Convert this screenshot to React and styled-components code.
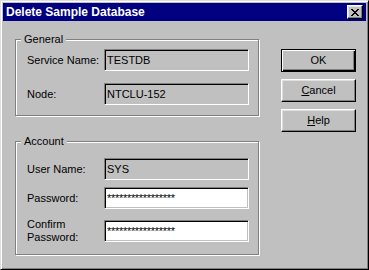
import React from "react";
import styled, { createGlobalStyle } from "styled-components";

const Global = createGlobalStyle`
  html, body { margin: 0; padding: 0; background: #c0c0c0; }
  body { font-family: "Liberation Sans", Arial, sans-serif; font-size: 11px; color: #000; }
  * { box-sizing: border-box; }
`;

const Window = styled.div`
  width: 369px;
  height: 270px;
  background: #c0c0c0;
  border: 1px solid;
  border-color: #dfdfdf #000 #000 #dfdfdf;
  box-shadow: inset 1px 1px #fff, inset -1px -1px #808080;
  padding: 2px;
  display: flex;
  flex-direction: column;
`;

const TitleBar = styled.div`
  height: 18px;
  background: #000080;
  color: #fff;
  display: flex;
  align-items: center;
  justify-content: space-between;
  padding: 0 3px 0 3px;
`;

const Title = styled.span`
  font-weight: bold;
  font-size: 12px;
  line-height: 14px;
`;

const CloseButton = styled.div`
  width: 16px;
  height: 14px;
  background: #c0c0c0;
  border: 1px solid;
  border-color: #fff #000 #000 #fff;
  box-shadow: inset -1px -1px #808080, inset 1px 1px #dfdfdf;
  display: flex;
  align-items: center;
  justify-content: center;
`;

const Body = styled.div`
  flex: 1;
  display: flex;
  gap: 22px;
  padding: 12px 0 0 12px;
`;

const LeftCol = styled.div`
  width: 244px;
  display: flex;
  flex-direction: column;
  gap: 19px;
`;

const Group = styled.fieldset`
  margin: 0;
  min-width: 0;
  border: 1px solid #808080;
  box-shadow: inset 1px 1px #fff, 1px 1px #fff;
  padding: ${(p) => p.$pt}px 9px ${(p) => p.$pb}px 11px;
`;

const Legend = styled.legend`
  margin-left: -6px;
  padding: 0 3px;
  line-height: 13px;
  background: #c0c0c0;
`;

const Row = styled.div`
  display: flex;
  align-items: center;
  margin-top: ${(p) => p.$mt || 0}px;
`;

const Label = styled.div`
  width: 77px;
  flex: none;
  line-height: 13px;
`;

const Field = styled.div`
  flex: 1;
  height: 22px;
  border: 1px solid;
  border-color: #808080 #fff #fff #808080;
  box-shadow: inset 1px 1px #000, inset -1px -1px #c0c0c0;
  background: ${(p) => (p.$editable ? "#fff" : "#c0c0c0")};
  padding: 0 2px;
  display: flex;
  align-items: center;
  white-space: nowrap;
  overflow: hidden;
  letter-spacing: ${(p) => (p.$secret ? "-0.3px" : "0")};
`;

const ButtonCol = styled.div`
  display: flex;
  flex-direction: column;
  gap: 7px;
  padding-top: 16px;
`;

const Button = styled.div`
  width: 75px;
  height: 23px;
  background: #c0c0c0;
  border: 1px solid;
  border-color: ${(p) => (p.$default ? "#000" : "#fff #000 #000 #fff")};
  box-shadow: ${(p) =>
    p.$default
      ? "inset 1px 1px #fff, inset -1px -1px #000, inset -2px -2px #808080"
      : "inset -1px -1px #808080, inset 1px 1px #dfdfdf"};
  display: flex;
  align-items: center;
  justify-content: center;
  line-height: 13px;
`;

const Key = styled.span`
  text-decoration: underline;
`;

const xPixels = [
  "##....##",
  ".##..##.",
  "..####..",
  "...##...",
  "..####..",
  ".##..##.",
  "##....##",
];

function CloseIcon() {
  const rects = [];
  xPixels.forEach((row, y) =>
    row.split("").forEach((c, x) => {
      if (c === "#") rects.push(<rect key={`${x}-${y}`} x={x} y={y} width="1" height="1" />);
    })
  );
  return (
    <svg width="8" height="7" viewBox="0 0 8 7" shapeRendering="crispEdges" fill="#000">
      {rects}
    </svg>
  );
}

export default function App() {
  return (
    <>
      <Global />
      <Window>
        <TitleBar>
          <Title>Delete Sample Database</Title>
          <CloseButton>
            <CloseIcon />
          </CloseButton>
        </TitleBar>
        <Body>
          <LeftCol>
            <Group $pt={3} $pb={10}>
              <Legend>General</Legend>
              <Row>
                <Label>Service Name:</Label>
                <Field>TESTDB</Field>
              </Row>
              <Row $mt={12}>
                <Label>Node:</Label>
                <Field>NTCLU-152</Field>
              </Row>
            </Group>
            <Group $pt={10} $pb={10}>
              <Legend>Account</Legend>
              <Row>
                <Label>User Name:</Label>
                <Field>SYS</Field>
              </Row>
              <Row $mt={7}>
                <Label>Password:</Label>
                <Field $editable $secret>*****************</Field>
              </Row>
              <Row $mt={9}>
                <Label>
                  Confirm
                  <br />
                  Password:
                </Label>
                <Field $editable $secret>*****************</Field>
              </Row>
            </Group>
          </LeftCol>
          <ButtonCol>
            <Button $default>OK</Button>
            <Button>
              <Key>C</Key>ancel
            </Button>
            <Button>
              <Key>H</Key>elp
            </Button>
          </ButtonCol>
        </Body>
      </Window>
    </>
  );
}
